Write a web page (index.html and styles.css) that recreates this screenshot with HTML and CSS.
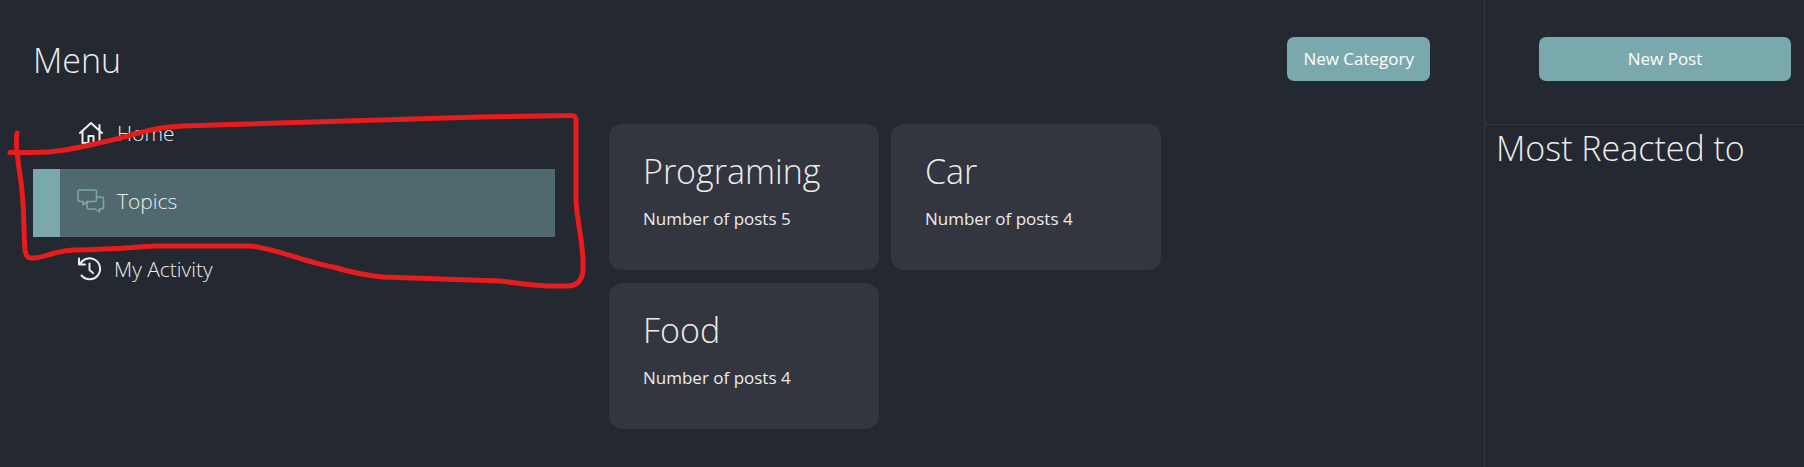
FILE: index.html
```html
<!DOCTYPE html>
<html lang="en">
<head>
<meta charset="utf-8">
<title>Topics</title>
<link rel="stylesheet" href="styles.css">
</head>
<body>
<div class="app">
  <main class="main">
    <header class="header">
      <h1 class="title">Menu</h1>
      <button class="button" type="button">New Category</button>
    </header>
    <div class="columns">
      <nav class="menu">
        <a class="menu-item" href="#home">
          <svg class="icon" viewBox="0 0 28 28"><path d="M3 14 14 4 25 14M5.500 12V24H11.500V17H16.500V24H22.500V12M22.500 11V6"/></svg>
          <span>Home</span>
        </a>
        <a class="menu-item active" href="#topics">
          <svg class="icon" viewBox="0 0 28 28"><path d="M3 3H17.500Q19.500 3 19.500 5V12.500Q19.500 14.500 17.500 14.500H10L6 18V14.500H3Q1 14.500 1 12.500V5Q1 3 3 3ZM19.500 10H24.500Q26.500 10 26.500 12V20Q26.500 22 24.500 22H22.500V25L18 22H12Q10 22 10 20V14.500"/></svg>
          <span>Topics</span>
        </a>
        <a class="menu-item tight" href="#activity">
          <svg class="icon" viewBox="0 0 28 28"><path d="M3 9.500A10.500 10.500 0 1 1 4.500 20.500M2 3.500V9.500H8M12.500 8.500V15L16 18"/></svg>
          <span>My Activity</span>
        </a>
      </nav>
      <section class="cards">
        <article class="card"><h2 class="title">Programing</h2><p class="count">Number of posts 5</p></article>
        <article class="card"><h2 class="title">Car</h2><p class="count">Number of posts 4</p></article>
        <article class="card"><h2 class="title">Food</h2><p class="count">Number of posts 4</p></article>
      </section>
    </div>
  </main>
  <aside class="side">
    <div class="side-top"><button class="button" type="button">New Post</button></div>
    <h2 class="title side-title">Most Reacted to</h2>
  </aside>
  <svg class="marker" width="600" height="300" viewBox="0 0 600 300"><path d="M17 133C15 142 18 162 20 175C25 205 23 225 25 250Q26 258 31 258C43 259 52 251 74 250C125 249 130 247 157 246H250C275 248 305 262 333 267Q360 275 383 277L500 281C515 282 530 287 567 286Q583 286 583 268C584 245 577 223 576 200V123Q577 115 571 115.500L480 117L183 126C150 127 130 137 103 142C80 147 60 153 30 152.500H10"/></svg>
</div>
</body>
</html>
```

FILE: styles.css
```css
* { box-sizing: border-box; }

body {
  margin: 0;
  background: #242830;
  color: #ececec;
  font-family: "Open Sans", "Noto Sans", sans-serif;
}

.app {
  position: relative;
  display: flex;
  min-height: 100vh;
}

.main {
  flex: 1;
  padding: 37px 54px 36px 33px;
}

.header {
  display: flex;
  justify-content: space-between;
  height: 64px;
}

.title {
  margin: 0;
  font-size: 34px;
  font-weight: 300;
  line-height: 46px;
}

.button {
  height: 44px;
  padding: 0 16px;
  border: 0;
  border-radius: 7px;
  background: #7aa9ad;
  color: #fff;
  font: 500 17px/24px "Open Sans", "Noto Sans", sans-serif;
}

.columns {
  display: grid;
  grid-template-columns: 522fr 821fr;
  gap: 54px;
}

.menu-item {
  display: flex;
  align-items: center;
  gap: 12px;
  height: 68px;
  padding: 0 17px 4px;
  border-left: 27px solid transparent;
  color: inherit;
  font-size: 21px;
  font-weight: 300;
  text-decoration: none;
}

.menu-item.tight { gap: 9px; }

.menu-item.active {
  border-color: #7aa9ad;
  background: #50696f;
}

.icon {
  width: 28px;
  height: 28px;
  fill: none;
  stroke: currentColor;
  stroke-width: 2;
  stroke-linejoin: round;
  stroke-linecap: round;
}

.active .icon {
  stroke: #7aa9ad;
  stroke-width: 1.5;
}

.cards {
  display: grid;
  grid-template-columns: repeat(auto-fill, 270px);
  align-content: start;
  gap: 13px 12px;
  padding-top: 23px;
}

.card {
  height: 146px;
  padding: 24px 34px;
  border-radius: 13px;
  background: #33363f;
}

.count {
  margin: 10px 0 0;
  font-size: 17px;
  font-weight: 500;
  line-height: 30px;
}

.side {
  width: 320px;
  border-left: 1px solid #33363f;
}

.side-top {
  display: flex;
  height: 125px;
  padding: 37px 13px 0 54px;
  border-bottom: 1px solid #33363f;
}

.side-top .button { flex: 1; }

.side-title { padding-left: 11px; }

.marker {
  position: absolute;
  top: 0;
  left: 0;
  fill: none;
  stroke: #e81c1c;
  stroke-width: 5;
  stroke-linecap: round;
  stroke-linejoin: round;
  pointer-events: none;
}
```
